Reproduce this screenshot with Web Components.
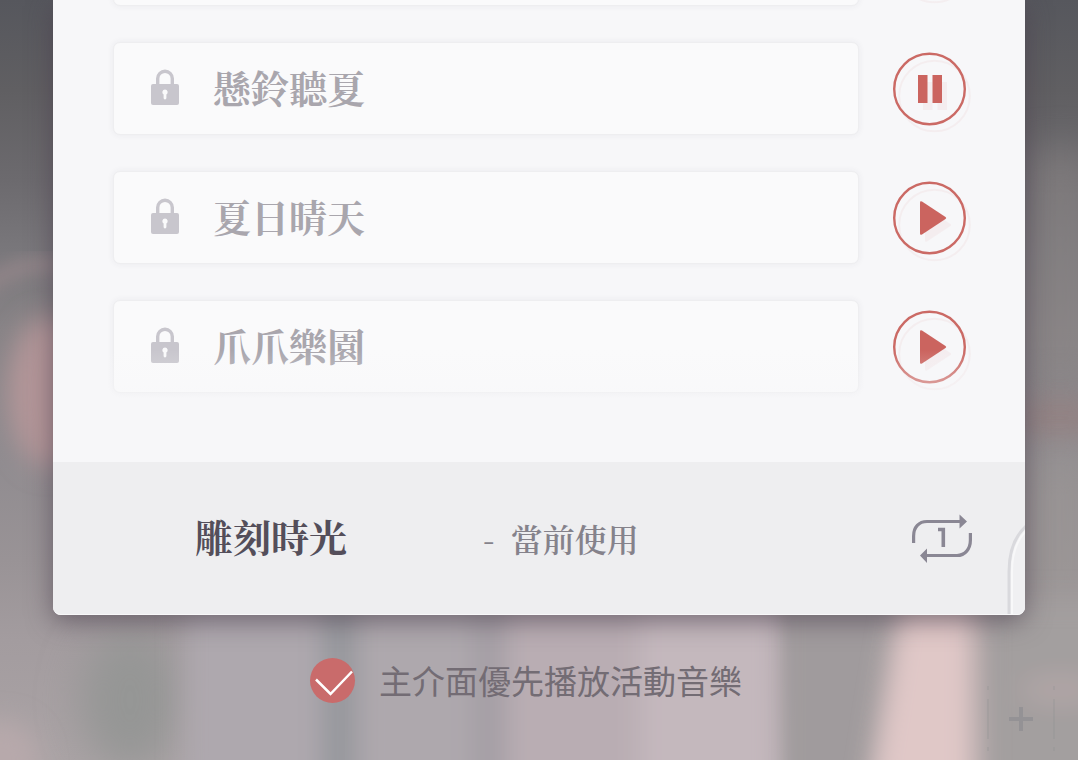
<!DOCTYPE html>
<html lang="zh-Hant">
<head>
<meta charset="utf-8">
<meta name="viewport" content="width=device-width, initial-scale=1">
<title>音樂</title>
<style>
html,body{margin:0;min-height:100%;overflow-x:hidden}
body{font-family:"Noto Serif CJK TC","Noto Sans CJK TC",serif;background:#8f8a8d}
</style>
</head>
<body>
<music-screen>
  <music-panel>
    <track-row></track-row>
    <track-row playing>懸鈴聽夏</track-row>
    <track-row>夏日晴天</track-row>
    <track-row>爪爪樂園</track-row>
    <now-playing slot="footer">雕刻時光<span slot="status">-&nbsp; 當前使用</span></now-playing>
  </music-panel>
  <check-option>主介面優先播放活動音樂</check-option>
</music-screen>
<script>
const define = (name, html, setup) => customElements.define(name, class extends HTMLElement {
  constructor() {
    super();
    this.attachShadow({ mode: "open" }).innerHTML = html;
  }
  connectedCallback() { if (setup) setup(this, this.shadowRoot); }
});

define("music-screen", `
<style>
:host{display:block;position:relative;box-sizing:border-box;min-height:100vh;padding:0 53px;overflow:hidden;isolation:isolate;
  background:linear-gradient(#56575d 0,#605f62 90px,#6c6a6e 180px,#79777b 250px,#878386 330px,#8f8b8f 450px,#999396 560px,#a39c9f 640px,#aaa3a5 760px)}
svg{position:absolute;inset:0;width:100%;height:100%;z-index:-1}
</style>
<svg viewBox="0 0 1078 760" preserveAspectRatio="none" aria-hidden="true">
  <defs>
    <filter id="b" x="-100%" y="-100%" width="300%" height="300%"><feGaussianBlur stdDeviation="20"/></filter>
    <filter id="s" x="-100%" y="-50%" width="300%" height="200%"><feGaussianBlur stdDeviation="13"/></filter>
    <filter id="t" x="-100%" y="-50%" width="300%" height="200%"><feGaussianBlur stdDeviation="8"/></filter>
  </defs>
  <rect x="1025" y="150" width="70" height="240" fill="#8a8585" opacity=".6" filter="url(#b)"/>
  <path d="M-20 290Q20 258 62 266" fill="none" stroke="#9c8a8e" stroke-width="18" opacity=".6" filter="url(#t)"/>
  <ellipse cx="50" cy="392" rx="42" ry="76" fill="#b49699" filter="url(#s)"/>
  <ellipse cx="1060" cy="418" rx="50" ry="20" fill="#958080" opacity=".7" filter="url(#s)"/>
  <rect x="1015" y="450" width="80" height="170" fill="#9b9795" opacity=".6" filter="url(#b)"/>
  <ellipse cx="130" cy="700" rx="50" ry="70" fill="#959695" filter="url(#b)"/>
  <ellipse cx="0" cy="760" rx="40" ry="40" fill="#b7a9ab" filter="url(#s)"/>
  <g filter="url(#s)">
    <rect x="185" y="600" width="140" height="200" fill="#aea8ae"/>
    <rect x="322" y="600" width="34" height="200" fill="#95979c"/>
    <rect x="357" y="600" width="115" height="200" fill="#aea8ad"/>
    <rect x="472" y="600" width="35" height="200" fill="#a49fa5"/>
    <rect x="507" y="600" width="135" height="200" fill="#b9adb3"/>
    <rect x="640" y="600" width="140" height="200" fill="#c4b8bd"/>
  </g>
  <g filter="url(#t)">
    <path d="M787 600h110l-30 200h-80z" fill="#a09b9d"/>
  </g>
  <g filter="url(#s)">
    <path d="M900 600h74v200H868z" fill="#e0c8c7"/>
    <rect x="984" y="600" width="130" height="200" fill="#a39f9f"/>
    <ellipse cx="1060" cy="690" rx="40" ry="16" fill="#b0a5a6"/>
  </g>
  <g fill="none" stroke="#8a8b8f">
    <path d="M1009 719h24M1021 707v24" stroke-width="4" opacity=".6"/>
    <path d="M988 699v40M1054 699v40M988 686v4M1054 686v4M988 747v4M1054 747v4" stroke-width="2" opacity=".22"/>
  </g>
</svg>
<slot></slot>`);

define("music-panel", `
<style>
:host{display:block;border-radius:0 0 8px 8px;background:#f7f7f9;box-shadow:0 6px 26px rgba(72,62,76,.62)}
.list{height:462px;box-sizing:border-box;padding:0 59px 69px 60px;overflow:hidden;position:relative;
  display:flex;flex-direction:column;justify-content:flex-end;gap:36px}
.list::after{content:"";position:absolute;left:0;right:0;bottom:0;height:112px;pointer-events:none;
  background:linear-gradient(rgba(247,247,249,0),rgba(247,247,249,.4) 40px,#f7f7f9)}
</style>
<main class="list"><slot></slot></main>
<slot name="footer"></slot>`);

define("track-row", `
<style>
:host{display:flex;flex:none;align-items:center;gap:34px}
.card{flex:1;height:93px;box-sizing:border-box;padding:0 37px 4px;display:flex;align-items:center;gap:34px;
  border:1px solid #eeeef0;border-radius:7px;background:#fafafb;box-shadow:0 0 6px rgba(60,60,80,.07);
  font-size:38px;line-height:48px;font-weight:700;color:#a9a6ad}
.lock{width:28px;height:36px;flex:none}
button{width:73px;height:73px;padding:0;border:0;background:none;flex:none;cursor:pointer}
button svg{display:block;overflow:visible}
</style>
<div class="card">
  <svg class="lock" viewBox="0 0 28 36" aria-hidden="true">
    <path d="M6.700 16V9.500a7.300 7.300 0 0 1 14.600 0V16" fill="none" stroke="#c8c6cd" stroke-width="3.400"/>
    <rect y="15" width="28" height="21" rx="2" fill="#c8c6cd"/>
    <path d="M14 20.500a2.700 2.700 0 0 1 1.400 5v3.500a1.400 1.400 0 0 1-2.800 0v-3.500a2.700 2.700 0 0 1 1.400-5z" fill="#fafafb"/>
  </svg>
  <span><slot></slot></span>
</div>
<button type="button"><svg width="73" height="73" viewBox="0 0 73 73" aria-hidden="true">
  <g transform="translate(5 7)" opacity=".06"><circle cx="36.500" cy="37" r="35.300" fill="none" stroke="#cb645f" stroke-width="2"/><path class="glyph" fill="#cb645f"/></g>
  <circle cx="36.500" cy="37" r="35.300" fill="none" stroke="#cb6a65" stroke-width="2.400"/>
  <path class="glyph" fill="#cb645f"/>
</svg></button>`, (el, root) => {
  const playing = el.hasAttribute("playing");
  root.querySelector("button").setAttribute("aria-label", playing ? "暫停" : "播放");
  const d = playing
    ? "M25 23h9.500v28H25zM39.500 23H49v28h-9.500z"
    : "M27 21.500q0-2 2-1L52.500 36q1.500 1 0 2L29 53.500q-2 1-2-1z";
  root.querySelectorAll(".glyph").forEach(p => p.setAttribute("d", d));
});

define("now-playing", `
<style>
:host{display:flex;align-items:center;position:relative;overflow:hidden;height:153px;box-sizing:border-box;
  padding:0 53px 0 142px;background:#eeeef0;border-bottom:1px solid #f8f8f9;border-radius:0 0 8px 8px}
.title{padding-bottom:4px;font-size:38px;line-height:48px;font-weight:700;color:#544e5a}
.status{margin-left:136px;font-size:32px;line-height:48px;font-weight:600;color:#85828b;flex:1}
button{width:60px;height:50px;padding:0;border:0;background:none;flex:none;cursor:pointer}
button svg{display:block}
.curve{position:absolute;right:0;bottom:0}
</style>
<div class="title"><slot></slot></div>
<div class="status"><slot name="status"></slot></div>
<button type="button" aria-label="單曲循環"><svg width="60" height="50" viewBox="0 0 60 50" aria-hidden="true">
  <g fill="none" stroke="#8a8794" stroke-width="3.200">
    <path d="M1.600 30v-7C1.600 14 7 8.500 15 8.500h34"/>
    <path d="M58.400 20v7c0 9-5.400 15.500-13.400 15.500H13"/>
    <path d="M26 16.500h5.300V34" stroke-width="3.600"/>
  </g>
  <path d="M47.500 1.500 55 8.500l-7.500 7zM15 35.500 8 42.500l7 7.500z" fill="#8a8794"/>
</svg></button>
<svg class="curve" width="18" height="90" viewBox="0 0 18 90" aria-hidden="true">
  <path d="M1 90V48C1 27 8 12 18 2v88z" fill="#f0f0f2"/>
  <path d="M2 90V48C2 27 8 12 19 2" fill="none" stroke="#d9d9dd" stroke-width="3"/>
  <path d="M5 90V48C5 30 10 16 19 7" fill="none" stroke="#f8f8f9" stroke-width="2"/>
</svg>`);

define("check-option", `
<style>
:host{display:flex;justify-content:center;padding:41px 26px 0 0;font-family:"Noto Sans CJK TC",sans-serif}
label{display:flex;align-items:center;gap:24px;font-size:33px;line-height:48px;font-weight:400;color:#736c74;cursor:pointer}
.box{display:grid;width:45px;height:45px}
.box>*{grid-area:1/1}
input{appearance:none;width:45px;height:45px;margin:0;border-radius:50%;background:#c96b6b}
svg{pointer-events:none;z-index:1}
input:not(:checked)+svg{display:none}
</style>
<label for="c"><span class="box"><input id="c" type="checkbox" checked><svg width="45" height="45" viewBox="0 0 45 45" aria-hidden="true"><path d="M6 21.500 20.500 36 42 13.500" fill="none" stroke="#fff" stroke-width="2.500"/></svg></span><span><slot></slot></span></label>`);
</script>
</body>
</html>
